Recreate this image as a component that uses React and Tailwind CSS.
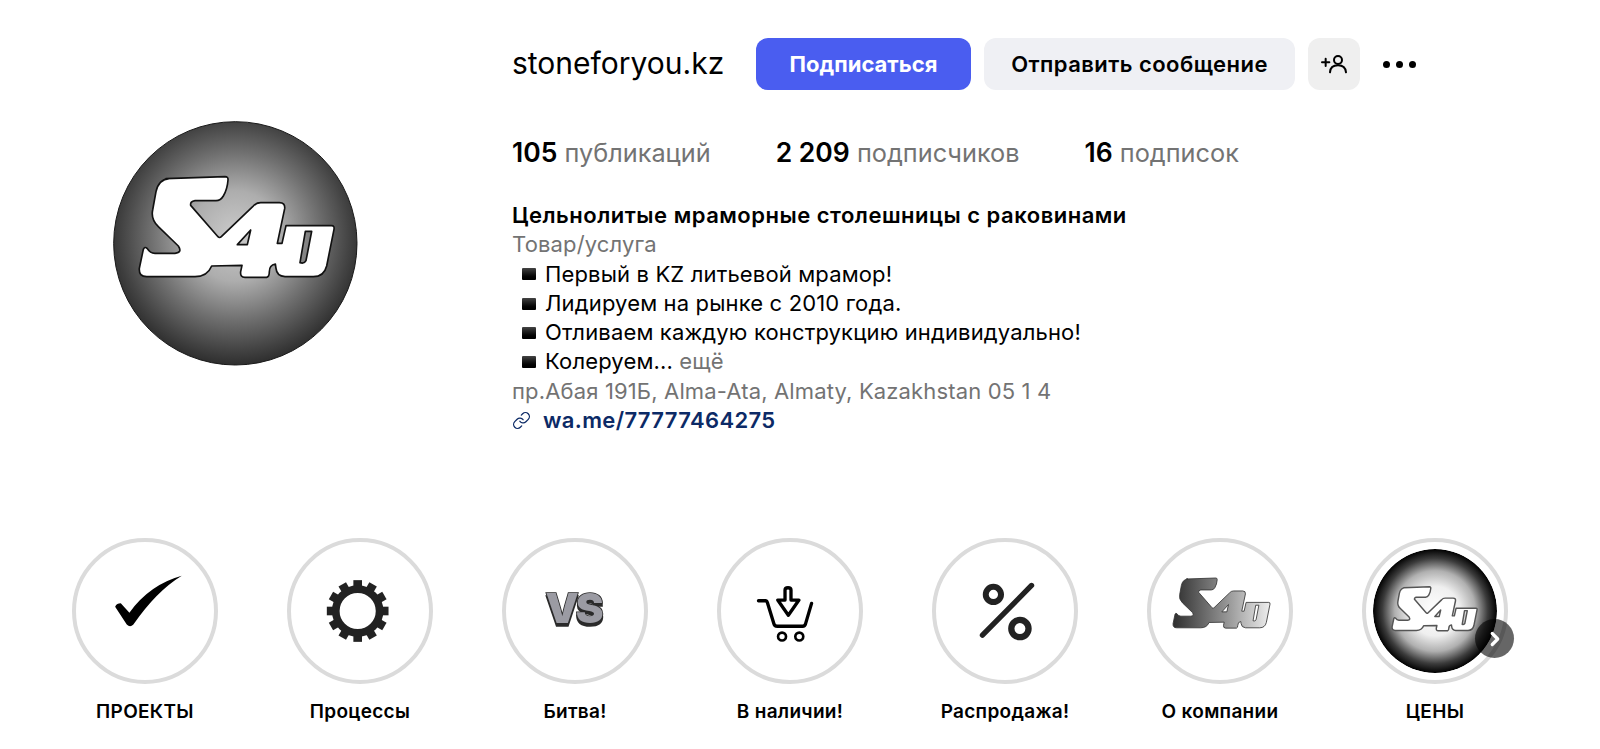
import React from 'react';
import { Link, ChevronRight } from 'lucide-react';

const S4U_PATH =
  'M108 56 L285 50 Q295 50 294 60 Q292 88 280 108 Q272 122 258 122 L195 122 Q180 124 182 136 L262 228 Q268 236 274 230 L368 140 Q378 128 392 128 L448 128 Q466 128 464 146 L442 250 L456 250 L468 197 L605 197 Q614 197 612 208 L590 318 Q582 350 550 350 L465 350 Q440 348 438 325 L436 312 Q418 315 418 335 Q418 350 410 352 L345 352 Q330 352 332 335 L336 316 L245 318 Q232 350 195 350 L50 350 Q26 350 28 325 L40 268 Q44 258 52 266 Q60 280 75 280 L135 280 Q158 278 145 258 L85 200 Q62 178 68 150 L78 95 Q86 58 118 56 Z ' +
  'M322 254 L362 210 L352 254 Z M545 214 L528 302 Q523 312 510 308 L526 214 Z';

const Avatar = () => (
  <svg viewBox="-51 -117 735 735" className="w-[245px] h-[245px] block">
    <defs>
      <radialGradient id="avatarBg" cx="0.5" cy="0.47" r="0.53">
        <stop offset="0" stopColor="#cbcbcb" />
        <stop offset="0.35" stopColor="#adadad" />
        <stop offset="0.65" stopColor="#707070" />
        <stop offset="0.88" stopColor="#444444" />
        <stop offset="1" stopColor="#2e2e2e" />
      </radialGradient>
    </defs>
    <circle cx="316" cy="250" r="365" fill="url(#avatarBg)" stroke="#1a1a1a" strokeWidth="3" />
    <path d={S4U_PATH} fill="#fff" fillRule="evenodd" stroke="#111" strokeWidth="5" strokeLinejoin="round" />
  </svg>
);

const TickIcon = () => (
  <svg viewBox="47 37 416 416" className="w-full h-full">
    <path d="M165 232 Q170 222 182 222 L208 250 Q270 165 366 139 Q290 185 220 286 Q210 296 200 286 Z" fill="#000" />
  </svg>
);

const GearIcon = () => (
  <svg viewBox="694 37 416 416" className="w-full h-full">
    {Array.from({ length: 12 }).map((_, i) => (
      <rect key={i} x="882" y="152" width="26" height="30" fill="#222" transform={`rotate(${i * 30} 895 245)`} />
    ))}
    <circle cx="895" cy="245" r="66" fill="none" stroke="#222" strokeWidth="23" />
  </svg>
);

const VsIcon = () => (
  <svg viewBox="47 37 416 416" className="w-full h-full drop-shadow-[0_3px_0_#2a2a2a]">
    <text x="249" y="281" textAnchor="middle" fontFamily="Inter, sans-serif" fontWeight="900" fontSize="126" letterSpacing="-9" fill="#9b9ba3" stroke="#2a2a2a" strokeWidth="5" paintOrder="stroke">VS</text>
  </svg>
);

const CartIcon = () => (
  <svg viewBox="694 37 416 416" className="w-full h-full" fill="none" stroke="#000" strokeWidth="10" strokeLinecap="round" strokeLinejoin="round">
    <path d="M807 214 L828 214 Q832 214 834 220 L853 282 Q855 291 864 291 L940 291 Q947 291 949 283 L967 222" />
    <path d="M887 212 V182 Q887 175 896 175 Q905 175 905 182 V212 H929 L897 258 L865 212 Z" />
    <circle cx="878" cy="322" r="12" strokeWidth="8" />
    <circle cx="930" cy="322" r="12" strokeWidth="8" />
  </svg>
);

const PercentIcon = () => (
  <svg viewBox="47 37 416 416" className="w-full h-full" fill="none" stroke="#222">
    <circle cx="220" cy="195" r="23" strokeWidth="18" />
    <circle cx="300" cy="298" r="26" strokeWidth="19" />
    <path d="M187 318 L335 168" strokeWidth="16" strokeLinecap="round" />
  </svg>
);

const CompanyLogo = () => (
  <svg viewBox="0 0 138 138" className="w-full h-full">
    <defs>
      <linearGradient id="logoFade" x1="0" x2="1" y1="0" y2="0">
        <stop offset="0" stopColor="#2e2e2e" />
        <stop offset="0.5" stopColor="#8a8a8a" />
        <stop offset="1" stopColor="#eeeeee" />
      </linearGradient>
    </defs>
    <g transform="translate(17.4 27.7) scale(0.166)">
      <path d={S4U_PATH} fill="url(#logoFade)" fillRule="evenodd" stroke="#333" strokeWidth="5" strokeLinejoin="round" />
    </g>
  </svg>
);

const PriceImage = () => (
  <svg viewBox="0 0 124 124" className="w-full h-full rounded-full">
    <defs>
      <radialGradient id="priceBg" cx="0.5" cy="0.5" r="0.5">
        <stop offset="0" stopColor="#ffffff" />
        <stop offset="0.4" stopColor="#efefef" />
        <stop offset="0.65" stopColor="#b0b0b0" />
        <stop offset="0.85" stopColor="#3c3c3c" />
        <stop offset="1" stopColor="#000000" />
      </radialGradient>
    </defs>
    <circle cx="62" cy="62" r="62" fill="url(#priceBg)" />
    <g transform="translate(15 30.5) scale(0.1455)">
      <path d={S4U_PATH} fill="#fff" fillRule="evenodd" stroke="#555" strokeWidth="10" strokeLinejoin="round" />
    </g>
  </svg>
);

const highlights = [
  { label: 'ПРОЕКТЫ', icon: <TickIcon /> },
  { label: 'Процессы', icon: <GearIcon /> },
  { label: 'Битва!', icon: <VsIcon /> },
  { label: 'В наличии!', icon: <CartIcon /> },
  { label: 'Распродажа!', icon: <PercentIcon /> },
  { label: 'О компании', icon: <CompanyLogo /> },
];

const BioLine = ({ children }) => (
  <div className="flex items-center pl-[10px] text-black">
    <span className="w-[14px] h-[12px] mr-[9px] rounded-[1px] bg-gradient-to-b from-[#444] to-black" />
    <span>{children}</span>
  </div>
);

const Stat = ({ value, label }) => (
  <div className="h-[34px]">
    <span className="text-[26.5px] font-semibold text-black">{value}</span> <span className="text-[#737373]">{label}</span>
  </div>
);

const Highlight = ({ label, children }) => (
  <div className="w-[146px] flex flex-col items-center">
    <div className="relative w-[146px] h-[146px] rounded-full border-4 border-[#dbdbdb] bg-white">
      {children}
    </div>
    <div className="mt-[17px] text-[19px] leading-[22px] tracking-[0.3px] font-semibold text-black whitespace-nowrap">{label}</div>
  </div>
);

export default function App() {
  return (
    <div className="w-full h-[749px] overflow-hidden bg-white [font-family:Inter,sans-serif]">
      <header className="flex pt-[38px] pl-[113px]">
        <div className="w-[245px] mt-[83px] mr-[154px]">
          <Avatar />
        </div>
        <section>
          <div className="flex items-center h-[52px]">
            <h1 className="w-[244px] pb-[2px] text-[30px] font-normal text-black">stoneforyou.kz</h1>
            <button className="w-[215px] h-[52px] rounded-[12px] bg-[#4a5df0] text-white text-[22px] font-bold">Подписаться</button>
            <button className="w-[311px] h-[52px] ml-[13px] rounded-[12px] bg-[#eff0f4] text-black text-[22px] tracking-[0.45px] font-semibold">Отправить сообщение</button>
            <button className="w-[52px] h-[52px] ml-[13px] rounded-[12px] bg-[#efefef] flex items-center justify-center" aria-label="Рекомендации">
              <svg viewBox="1112 100 84 64" className="w-[28px] h-[22px]" fill="none" stroke="#000" strokeWidth="6" strokeLinecap="round">
                <path d="M1118 127 H1140 M1129 116 V138" />
                <circle cx="1166" cy="120" r="12" />
                <path d="M1142 157 Q1143 136 1166 136 Q1188 136 1190 157" />
              </svg>
            </button>
            <div className="flex gap-[6px] ml-[23px]">
              <span className="w-[7px] h-[7px] rounded-full bg-black" />
              <span className="w-[7px] h-[7px] rounded-full bg-black" />
              <span className="w-[7px] h-[7px] rounded-full bg-black" />
            </div>
          </div>
          <div className="flex gap-[65px] mt-[45px] text-[25.3px] leading-[34px]">
            <Stat value="105" label="публикаций" />
            <Stat value="2 209" label="подписчиков" />
            <Stat value="16" label="подписок" />
          </div>
          <div className="mt-[32px] text-[22px] leading-[29.3px] tracking-[0.15px]">
            <div className="font-semibold text-black tracking-[0.5px]">Цельнолитые мраморные столешницы с раковинами</div>
            <div className="text-[#737373]">Товар/услуга</div>
            <BioLine>Первый в KZ литьевой мрамор!</BioLine>
            <BioLine>Лидируем на рынке с 2010 года.</BioLine>
            <BioLine>Отливаем каждую конструкцию индивидуально!</BioLine>
            <BioLine>Колеруем... <span className="text-[#737373]">ещё</span></BioLine>
            <div className="text-[#737373]">пр.Абая 191Б, Alma-Ata, Almaty, Kazakhstan 05 1 4</div>
            <div className="flex items-center font-semibold text-[#0c2a66] tracking-[0.36px]">
              <Link size={19} strokeWidth={1.6} className="mr-[12px]" />
              <span>wa.me/77777464275</span>
            </div>
          </div>
        </section>
      </header>
      <div className="flex gap-[69px] pl-[72px] mt-[103px]">
        {highlights.map((item) => (
          <Highlight key={item.label} label={item.label}>{item.icon}</Highlight>
        ))}
        <Highlight label="ЦЕНЫ">
          <div className="w-full h-full p-[7px]">
            <PriceImage />
          </div>
          <button className="absolute left-[109px] top-[77px] w-[39px] h-[39px] rounded-full bg-black/60 flex items-center justify-center text-white" aria-label="Далее">
            <ChevronRight size={22} strokeWidth={3.5} />
          </button>
        </Highlight>
      </div>
    </div>
  );
}
